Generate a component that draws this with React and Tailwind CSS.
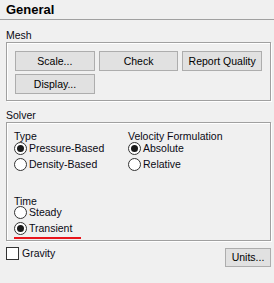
import React from 'react';

const Button = ({ children, w = 'w-[80px]', h = 'h-[20px]' }) => (
    <div className={`${w} ${h} bg-[#e1e1e1] border border-[#adadad] flex items-center justify-center text-black leading-none`}>
        {children}
    </div>
);

const Radio = ({ label, checked }) => (
    <div className="h-[16px] flex items-center leading-[16px]">
        <div className="w-[13px] h-[13px] rounded-full border border-[#333333] bg-white flex items-center justify-center">
            {checked && <div className="w-[7px] h-[7px] rounded-full bg-[#1a1a1a]"></div>}
        </div>
        <span className="ml-[2px]">{label}</span>
    </div>
);

const GroupLabel = ({ children, className = '' }) => (
    <div className={`h-[13px] leading-[13px] pl-[6px] ${className}`}>{children}</div>
);

export default function App() {
    return (
        <div className="w-[274px] h-[283px] bg-[#f0f0f0] overflow-hidden text-[10.5px] text-[#0a0a14] font-['Liberation_Sans',Arial,sans-serif]">
            {/* Header */}
            <div className="h-[20px] border-b border-[#a0a0a0] px-[6px] text-[13px] font-bold leading-[19px] text-black">
                General
            </div>

            {/* Mesh */}
            <GroupLabel className="mt-[9px]">Mesh</GroupLabel>
            <div className="ml-[6px] w-[265px] h-[59px] border border-[#a0a0a0] shadow-[inset_1px_1px_0_#ffffff,1px_1px_0_#ffffff] px-[8px] pt-[8px] flex flex-col gap-[3px]">
                <div className="flex gap-[4px]">
                    <Button>Scale...</Button>
                    <Button>Check</Button>
                    <Button>Report Quality</Button>
                </div>
                <div className="flex">
                    <Button>Display...</Button>
                </div>
            </div>

            {/* Solver */}
            <GroupLabel className="mt-[8px]">Solver</GroupLabel>
            <div className="ml-[6px] w-[265px] h-[119px] border border-[#a0a0a0] shadow-[inset_1px_1px_0_#ffffff,1px_1px_0_#ffffff] pl-[7px] pt-[7px]">
                <div className="flex">
                    <div className="w-[114px]">
                        <div className="h-[10px] leading-[13px]">Type</div>
                        <Radio label="Pressure-Based" checked />
                        <Radio label="Density-Based" />
                    </div>
                    <div>
                        <div className="h-[10px] leading-[13px]">Velocity Formulation</div>
                        <Radio label="Absolute" checked />
                        <Radio label="Relative" />
                    </div>
                </div>
                <div className="mt-[23px]">
                    <div className="h-[9px] leading-[13px]">Time</div>
                    <Radio label="Steady" />
                    <Radio label="Transient" checked />
                    <div className="mt-[1px] w-[67px] h-[2px] bg-[#e8141b]"></div>
                </div>
            </div>

            {/* Bottom row */}
            <div className="ml-[6px] w-[265px] mt-[6px] flex justify-between items-start">
                <div className="flex items-center h-[13px] leading-[13px]">
                    <div className="w-[13px] h-[13px] border border-[#333333] bg-white"></div>
                    <span className="ml-[3px]">Gravity</span>
                </div>
                <div className="mt-[1px]">
                    <Button w="w-[46px]" h="h-[19px]">Units...</Button>
                </div>
            </div>
        </div>
    );
}
